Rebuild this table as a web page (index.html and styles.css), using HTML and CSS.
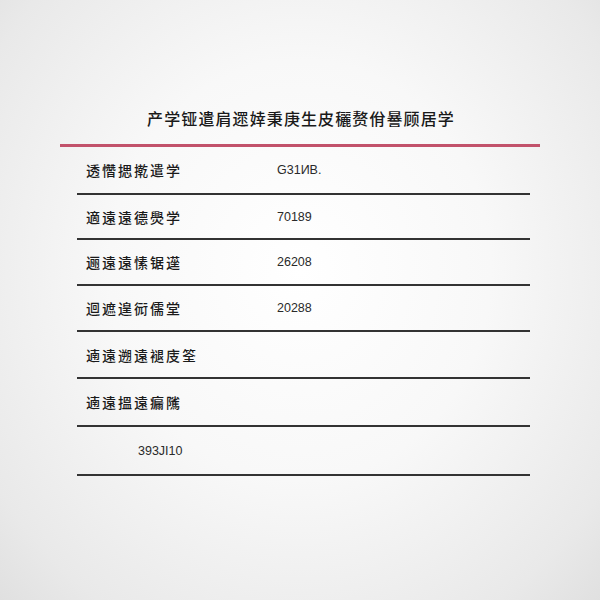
FILE: index.html
```html
<!DOCTYPE html>
<html lang="zh">
<head>
<meta charset="utf-8">
<link rel="stylesheet" href="styles.css">
</head>
<body>
<div class="page">
  <h1 class="title">产学铔遣肩遝婞秉庚生皮穲赘佾謈顾居学</h1>
  <div class="accent"></div>
  <div class="table">
    <div class="row r1"><span class="label">透㦧揌㨴遣学</span><span class="num">G31ИB.</span></div>
    <div class="row r2"><span class="label">適遠遠德爂学</span><span class="num">70189</span></div>
    <div class="row"><span class="label">逦遠遠愫锯遳</span><span class="num">26208</span></div>
    <div class="row"><span class="label">迴遮遑衏儒堂</span><span class="num">20288</span></div>
    <div class="row r5"><span class="label">遖遠遡遠褪庋筌</span><span class="num"></span></div>
    <div class="row r6"><span class="label">遖遠搵遠瘺隲</span><span class="num"></span></div>
    <div class="row r7"><span class="label"></span><span class="num alt">393JI10</span></div>
  </div>
</div>
</body>
</html>
```

FILE: styles.css
```css
html, body {
  margin: 0;
  padding: 0;
}
body {
  width: 600px;
  height: 600px;
  overflow: hidden;
  background: radial-gradient(ellipse at 50% 45%, #ffffff 0%, #f8f8f8 45%, #e9e9e9 85%, #e0e0e0 100%);
  font-family: "Noto Sans CJK SC", "Noto Sans", sans-serif;
  color: #222;
}
.page {
  padding-top: 107px;
}
.title {
  margin: 0;
  font-size: 16px;
  font-weight: 500;
  line-height: 22px;
  letter-spacing: 1.1px;
  text-align: center;
  color: #1a1a1a;
  padding-left: 2px;
}
.accent {
  margin: 15px 60px 0 60px;
  height: 3px;
  background: #c2526b;
}
.table {
  margin: 0 70px 0 77px;
}
.row {
  display: flex;
  align-items: center;
  height: 44px;
  border-bottom: 2px solid #333;
}
.r1 { height: 46px; }
.r2 { height: 43px; }
.r5 { height: 45px; }
.r6 { height: 46px; }
.r7 { height: 47px; }
.label {
  width: 191px;
  padding-left: 9px;
  font-size: 14px;
  font-weight: 500;
  letter-spacing: 2px;
  color: #1a1a1a;
}
.num {
  font-family: "Liberation Sans", "Arial", sans-serif;
  font-size: 12.5px;
  color: #2a2a2a;
}
.num.alt {
  margin-left: -139px;
}
```
